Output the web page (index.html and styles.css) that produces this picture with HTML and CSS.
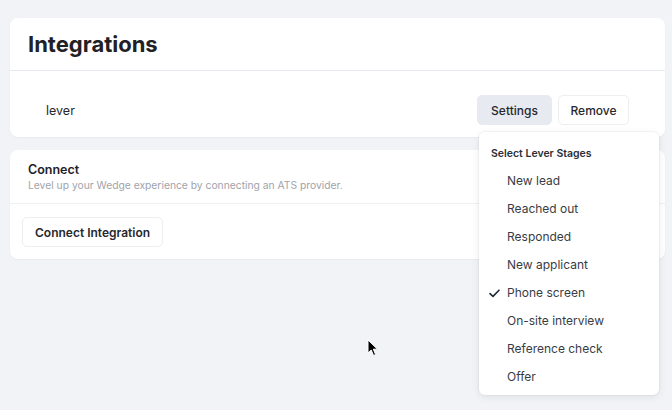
FILE: index.html
```html
<!DOCTYPE html>
<html lang="en">
<head>
    <meta charset="UTF-8">
    <meta name="viewport" content="width=device-width, initial-scale=1.0">
    <title>Integrations</title>
    <link rel="stylesheet" href="styles.css">
</head>
<body>
    <div class="card">
        <div class="card-header">
            <h1>Integrations</h1>
        </div>
        <div class="integration">
            <div class="integration-name">lever</div>
            <div class="actions">
                <button class="btn btn-active">Settings</button>
                <button class="btn btn-remove">Remove</button>
                <div class="menu">
                    <div class="menu-title">Select Lever Stages</div>
                    <div class="menu-item">New lead</div>
                    <div class="menu-item">Reached out</div>
                    <div class="menu-item">Responded</div>
                    <div class="menu-item">New applicant</div>
                    <div class="menu-item checked">
                        <svg class="check" width="11" height="9" viewBox="0 0 11 9"><path d="M1 4.6 L4 7.4 L10 1.2" fill="none" stroke="#1f2937" stroke-width="1.6" stroke-linecap="round" stroke-linejoin="round"/></svg>
                        Phone screen
                    </div>
                    <div class="menu-item">On-site interview</div>
                    <div class="menu-item">Reference check</div>
                    <div class="menu-item">Offer</div>
                </div>
            </div>
        </div>
    </div>

    <div class="card">
        <div class="connect-header">
            <h2>Connect</h2>
            <p>Level up your Wedge experience by connecting an ATS provider.</p>
        </div>
        <div class="connect-body">
            <button class="btn">Connect Integration</button>
        </div>
    </div>

    <svg class="cursor" width="12" height="18" viewBox="0 0 12 18"><path d="M1 1 L1 14 L4.2 11 L6.6 16.5 L8.6 15.6 L6.3 10.2 L10.5 10.2 Z" fill="#000" stroke="#fff" stroke-width="1"/></svg>
</body>
</html>
```

FILE: styles.css
```css
* {
    margin: 0;
    padding: 0;
    box-sizing: border-box;
    font-family: Inter, "Noto Sans", sans-serif;
}

body {
    background: #f2f3f7;
    padding: 18px 7px 0 10px;
    color: #1f2937;
    position: relative;
    height: 410px;
    overflow: hidden;
}

.card {
    background: white;
    border-radius: 8px;
    box-shadow: 0 1px 2px rgba(0,0,0,0.04);
    margin-bottom: 13px;
}

.card-header {
    height: 53px;
    display: flex;
    align-items: center;
    padding: 0 18px;
    border-bottom: 1px solid #e8e9ee;
}

h1 {
    font-size: 22px;
    font-weight: 700;
    color: #1f2127;
}

.integration {
    display: flex;
    justify-content: space-between;
    align-items: center;
    padding: 24px 36px 12px 36px;
}

.integration-name {
    font-size: 12.5px;
    color: #27282d;
}

.actions {
    display: flex;
    gap: 6px;
    position: relative;
}

.btn {
    background: white;
    border: 1px solid #eceef2;
    height: 30px;
    padding: 0 12px;
    border-radius: 5px;
    font-size: 12px;
    font-weight: 500;
    color: #27282d;
}

.btn-active {
    background: #e8eaf1;
    border-color: #e8eaf1;
    width: 75px;
}

.btn-remove {
    width: 71px;
    padding: 0;
}

.menu {
    position: absolute;
    top: 37px;
    left: 2px;
    width: 180px;
    background: white;
    border-radius: 6px;
    box-shadow: 0 2px 8px rgba(0,0,0,0.08), 0 0 0 1px rgba(0,0,0,0.03);
    padding: 13px 0 4px;
    z-index: 2;
}

.menu-title {
    font-size: 10.5px;
    font-weight: 600;
    color: #2d2f36;
    padding: 0 12px;
    height: 18px;
    line-height: 18px;
    margin-bottom: 4px;
}

.menu-item {
    position: relative;
    height: 28px;
    line-height: 28px;
    padding-left: 28px;
    font-size: 12px;
    color: #3a3c44;
}

.check {
    position: absolute;
    left: 10px;
    top: 10px;
}

.connect-header {
    padding: 12px 18px 11px;
    border-bottom: 1px solid #f0f1f4;
}

h2 {
    font-size: 12.5px;
    font-weight: 600;
    color: #1f2127;
    line-height: 14px;
    padding-top: 1px;
}

.connect-header p {
    font-size: 10.3px;
    color: #a0a3ab;
    margin-top: 1px;
    line-height: 14px;
}

.connect-body {
    padding: 13px 12px 12px;
}

.connect-body .btn {
    height: 30px;
    font-weight: 600;
    padding: 0 12px;
}

.cursor {
    position: absolute;
    left: 367px;
    top: 339px;
}
```
